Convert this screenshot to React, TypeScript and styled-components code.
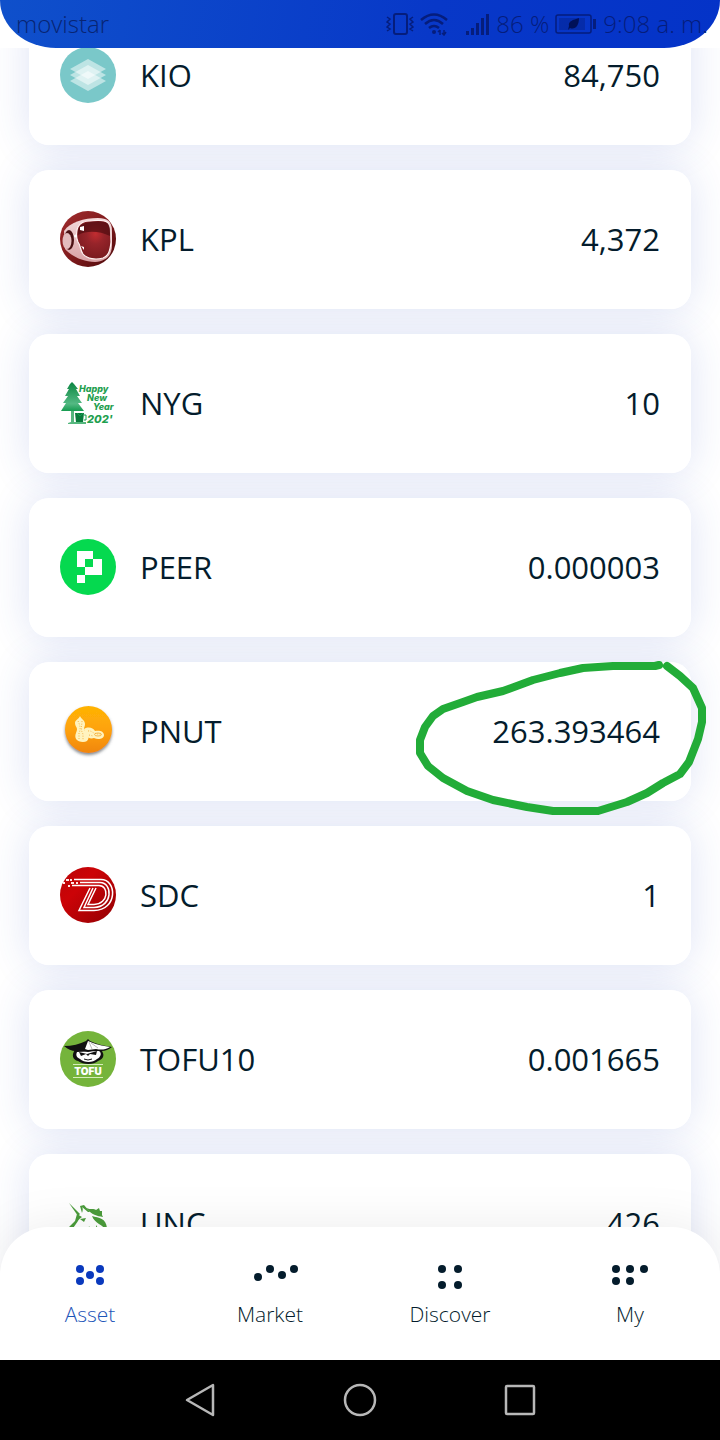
// src/App.tsx
import React from 'react';
import styled, { createGlobalStyle } from 'styled-components';

const GlobalStyle = createGlobalStyle`
  * {
    box-sizing: border-box;
  }
  body {
    margin: 0;
    background: #ffffff;
    font-family: 'Open Sans', 'Noto Sans', sans-serif;
    color: #041c2c;
  }
`;

const Screen = styled.div`
  display: flex;
  flex-direction: column;
  height: 100vh;
  overflow: hidden;
`;

const StatusWrap = styled.header`
  position: relative;
  z-index: 2;
  flex: none;
  background: #ffffff;
`;

const StatusBar = styled.div`
  display: flex;
  align-items: center;
  justify-content: space-between;
  height: 48px;
  padding: 0 12px 0 16px;
  border-radius: 0 0 56px 56px / 0 0 48px 48px;
  background: linear-gradient(100deg, #0f50cb, #0838c8 60%, #0433c8);
  color: #082573;
  font-size: 24px;
  font-weight: 300;
  line-height: 32px;
  white-space: nowrap;
`;

const StatusGroup = styled.div`
  display: flex;
  align-items: center;
  gap: 6px;
  color: #051d7c;
`;

const AssetList = styled.ul`
  position: relative;
  z-index: 0;
  display: flex;
  flex: 1;
  flex-direction: column;
  gap: 25px;
  min-height: 0;
  margin: -42px 0 0;
  padding: 0 29px;
  list-style: none;
`;

/* the shadow sits under every card, so it never tints the next one */
const Card = styled.li`
  position: relative;
  display: flex;
  flex: none;
  align-items: center;
  gap: 24px;
  padding: 41px 31px 42px;
  border-radius: 20px;
  background: #ffffff;

  &::before {
    content: '';
    position: absolute;
    inset: 0;
    z-index: -1;
    border-radius: 20px;
    box-shadow: 0 0 40px rgba(50, 80, 190, 0.16);
  }
`;

const TokenIcon = styled.svg`
  flex: none;
  width: 56px;
  height: 56px;
`;

const CardText = styled.span`
  font-size: 31px;
  line-height: 40px;
`;

const Amount = styled(CardText)`
  margin-left: auto;
`;

const Marker = styled.svg`
  position: absolute;
  top: -4px;
  right: -18px;
  width: 296px;
  height: 160px;
  pointer-events: none;
`;

const TabBar = styled.nav`
  position: relative;
  z-index: 1;
  display: grid;
  flex: none;
  grid-template-columns: repeat(4, 1fr);
  margin-top: -67px;
  padding: 35px 0 32px;
  border-radius: 48px 48px 0 0;
  background: #ffffff;
  box-shadow: 0 0 50px rgba(0, 0, 0, 0.08);
`;

const Tab = styled.button<{ $active?: boolean }>`
  display: flex;
  flex-direction: column;
  align-items: center;
  gap: 10px;
  padding: 0;
  border: 0;
  background: none;
  color: ${({ $active }) => ($active ? '#1c55b8' : '#041c2c')};
  font-family: inherit;
  font-size: 21px;
  font-weight: 300;
  line-height: 28px;

  svg {
    fill: ${({ $active }) => ($active ? '#0a39bd' : '#041c2c')};
  }
`;

const SystemBar = styled.footer`
  display: flex;
  flex: none;
  align-items: center;
  justify-content: center;
  gap: 120px;
  height: 80px;
  background: #000000;
`;

const SystemButton = styled.button`
  width: 40px;
  height: 40px;
  padding: 0;
  border: 0;
  background: none;

  svg {
    display: block;
    fill: none;
    stroke: #b8b8b8;
    stroke-width: 2.5;
    stroke-linejoin: round;
  }
`;

const KioIcon = () => (
	<TokenIcon viewBox='0 0 56 56'>
		<circle cx='28' cy='28' r='28' fill='#7ac8c9' />
		<g fill='#ffffff' fillOpacity='0.5'>
			<path d='M28 12 46 22 28 32 10 22Z' />
			<path d='M28 18 46 28 28 38 10 28Z' />
			<path d='M28 24 46 34 28 44 10 34Z' />
		</g>
	</TokenIcon>
);

const KplIcon = () => (
	<TokenIcon viewBox='0 0 56 56'>
		<defs>
			<linearGradient id='kplBack' x1='0' y1='0' x2='1' y2='1'>
				<stop offset='0' stopColor='#a32e30' />
				<stop offset='0.55' stopColor='#7c191b' />
				<stop offset='1' stopColor='#4b090b' />
			</linearGradient>
			<radialGradient id='kplVisor' cx='0.55' cy='0.35' r='0.65'>
				<stop offset='0' stopColor='#c22c30' />
				<stop offset='0.4' stopColor='#96242a' />
				<stop offset='1' stopColor='#7a1a1f' />
			</radialGradient>
			<linearGradient id='kplShell' x1='0' y1='0' x2='0' y2='1'>
				<stop offset='0' stopColor='#f3d9da' />
				<stop offset='1' stopColor='#d8a0a4' />
			</linearGradient>
		</defs>
		<circle cx='28' cy='28' r='28' fill='url(#kplBack)' />
		<path d='M4 20C10 11 24 7 38 7C47 7 52 10 52 20V34C52 45 46 50 35 51C22 51 10 44 5 38Z' fill='url(#kplShell)' />
		<path d='M30 10C38 9 45 9 48 12C51 16 51 24 51 31C50 41 48 45 43 47C36 49 27 48 23 43C20 39 21 35 18 31C16 27 16 20 18 16C20 12 24 10 30 10Z' fill='url(#kplVisor)' stroke='#fff2f2' strokeWidth='1.2' />
		<path d='M18 24C27 19 40 20 50 25C51 17 49 13 47 12C43 10 36 10 30 11C22 12 17 15 18 24Z' fill='#4f0b10' fillOpacity='0.7' />
		<ellipse cx='9' cy='29' rx='5' ry='10' fill='#4b1013' />
		<ellipse cx='7' cy='30' rx='4.5' ry='8' fill='#e3bcbe' />
		<path d='M20 16 24 15 24 20 20 19ZM21 35 24 36 24 39Z' fill='#ffffff' />
		<circle cx='15.5' cy='25' r='1.5' fill='#ffffff' />
	</TokenIcon>
);

const NygIcon = () => (
	<TokenIcon viewBox='0 0 56 56'>
		<defs>
			<linearGradient id='nygTree' x1='0' y1='0' x2='0' y2='1'>
				<stop offset='0' stopColor='#0b8443' />
				<stop offset='0.3' stopColor='#279a5a' />
				<stop offset='0.75' stopColor='#54b983' />
				<stop offset='1' stopColor='#159b50' />
			</linearGradient>
		</defs>
		<path d='M12 7 14 9 18 14 16 14 20 21 17 21 22 28 18 28 24 36H1L6 28H3L8 21H5L9 14H7L10 9Z' fill='url(#nygTree)' />
		<path d='M11 36H14V47H26V49H8V48L11 47Z' fill='#55b77e' />
		<path d='M15 38H24L23 47H16Z' fill='#0a7b3c' />
		<path d='M17 38 20 41 23 38M24 40H26V45H24' fill='none' stroke='#14a050' strokeWidth='1' />
		<g fill='#1fa04f' fontFamily='Inter, sans-serif' fontStyle='italic' fontWeight='800'>
			<text x='19' y='17' fontSize='9'>Happy</text>
			<text x='27' y='26' fontSize='9'>New</text>
			<text x='33' y='35' fontSize='9'>Year</text>
			<text x='27' y='48' fontSize='11'>202'</text>
		</g>
	</TokenIcon>
);

const PeerIcon = () => (
	<TokenIcon viewBox='0 0 56 56'>
		<circle cx='28' cy='28' r='28' fill='#05d94f' />
		<path d='M17 12H33V20H42V36H25V28H17ZM25 20V28H33V20Z' fill='#ffffff' fillRule='evenodd' />
		<path d='M17 36H25V44H17Z' fill='#ffffff' />
	</TokenIcon>
);

const PnutIcon = () => (
	<TokenIcon viewBox='0 0 56 56'>
		<defs>
			<linearGradient id='pnutFill' x1='0' y1='0' x2='0' y2='1'>
				<stop offset='0' stopColor='#ffb405' />
				<stop offset='0.5' stopColor='#fea209' />
				<stop offset='1' stopColor='#f0860f' />
			</linearGradient>
			<filter id='pnutShadow' x='-20%' y='-20%' width='140%' height='150%'>
				<feDropShadow dx='0' dy='2' stdDeviation='1.5' floodColor='#53585f' floodOpacity='0.7' />
			</filter>
		</defs>
		<circle cx='28.5' cy='26.5' r='23.5' fill='url(#pnutFill)' filter='url(#pnutShadow)' />
		<path d='M20 13C21 16 25 17 25 21C25 24 23 25 25 28C28 32 30 35 27 38C24 40 18 39 16 36C14 32 17 29 17 26C17 24 15 23 15 20C15 17 19 16 20 13Z' fill='#fff3bf' />
		<path d='M24 26C29 23 33 25 35 28C39 27 44 28 44 32C44 36 38 37 34 35C31 36 28 35 26 33Z' fill='#fff3bf' />
		<g fill='none' stroke='#f2a72c' strokeWidth='0.8' strokeDasharray='1 1.5'>
			<path d='M18 18C20 22 21 26 19 30V37M22 18C22 23 20 26 23 31V37' />
			<path d='M28 28C32 27 33 32 41 31M29 32 33 33' />
		</g>
		<ellipse cx='38' cy='31.5' rx='3.5' ry='1.5' fill='none' stroke='#f2a72c' strokeWidth='0.8' />
	</TokenIcon>
);

const SdcIcon = () => (
	<TokenIcon viewBox='0 0 56 56'>
		<defs>
			<linearGradient id='sdcFill' x1='0' y1='0' x2='1' y2='1'>
				<stop offset='0' stopColor='#b80508' />
				<stop offset='0.35' stopColor='#cc0307' />
				<stop offset='1' stopColor='#920103' />
			</linearGradient>
		</defs>
		<circle cx='28' cy='28' r='28' fill='url(#sdcFill)' />
		<g fill='none' stroke='#ffffff' strokeWidth='1.5'>
			<path d='M14 12.5H41C57 12.5 58 43 34 43.5H19L30 21' />
			<path d='M20 15.5H40C53 15.5 53 40 34 40.5H24L33 21' />
			<path d='M12 18.5H39C49 18.5 49 37 34 37.5H28L36 21' />
		</g>
		<path d='M6 12H9V14H6ZM10 12H12V14H10ZM3 15H5V17H3ZM11 15H14V17H11ZM16 15H18V17H16ZM8 18H10V20H8Z' fill='#ffe5e5' />
	</TokenIcon>
);

const TofuIcon = () => (
	<TokenIcon viewBox='0 0 56 56'>
		<circle cx='28' cy='28' r='28' fill='#75b43b' />
		<path d='M15 19C11 24 13 29 18 30C23 34 34 34 38 30C44 28 45 23 41 19Z' fill='#111111' />
		<path d='M17 21C15 25 18 27 20 28C24 32 33 32 37 28C41 26 42 22 39 20Z' fill='#ffffff' />
		<path d='M19 21 27 23 37 20 36 24 30 23 28 25 26 23 21 25Z' fill='#111111' />
		<path d='M24 28Q28 30 32 28' fill='none' stroke='#111111' strokeWidth='1' />
		<path d='M28 8 30 10C36 13 44 15 52 16C47 20 42 21 36 19L28 21L20 19C15 21 10 20 4 15C12 15 20 13 26 10Z' fill='#111111' />
		<path d='M28 10C34 13 43 15 50 16C45 19 41 19 36 18L28 19L25 18Z' fill='#ffffff' />
		<path d='M29 11 32 18M31 12 38 17' fill='none' stroke='#777777' strokeWidth='0.5' />
		<path d='M13 33.5H43M13 46.5H43' stroke='#d6edbb' strokeWidth='1' />
		<text x='28' y='44' fill='#ffffff' fontFamily='Inter, sans-serif' fontSize='10' fontWeight='900' textAnchor='middle'>TOFU</text>
	</TokenIcon>
);

const UncIcon = () => (
	<TokenIcon viewBox='0 0 56 56'>
		<g fill='#4b9c3b'>
			<path d='M9 8 20 19 18 21Z' />
			<path d='M17 19 22 22C18 24 17 29 12 34L13 37H10L8 33L15 26Z' />
			<path d='M20 11 22 18C23 15 23 13 22 12L28 17H30L24 10Z' />
			<path d='M26 13C31 15 34 13 36 15L39 13L40 16L42 16V20L43 22C37 21 32 20 26 13Z' />
			<path d='M32 21C39 23 46 23 47 33L46 36C43 29 35 29 32 21Z' />
			<path d='M20 24 26 23 24 27Z' />
			<path d='M29 31 33 38H28ZM36 30 41 38H36Z' />
		</g>
	</TokenIcon>
);

// hand drawn ring around the amount
const Ring = () => (
	<Marker viewBox='413 658 296 160'>
		<path
			d='M659 665 655 666H613L583 668L560 673L533 680L503 691L477 697L463 702L443 709L433 716L425 727L420 740V753L428 766L443 778L467 791L493 800L527 807L553 811H598L627 802L647 793L663 783L680 774L689 762L698 739L702 722V708L693 688L680 676L667 666'
			fill='none'
			stroke='#22ac38'
			strokeWidth='8'
			strokeLinecap='round'
			strokeLinejoin='round'
		/>
	</Marker>
);

const assets = [
	{ name: 'KIO', amount: '84,750', Icon: KioIcon },
	{ name: 'KPL', amount: '4,372', Icon: KplIcon },
	{ name: 'NYG', amount: '10', Icon: NygIcon },
	{ name: 'PEER', amount: '0.000003', Icon: PeerIcon },
	{ name: 'PNUT', amount: '263.393464', Icon: PnutIcon, marked: true },
	{ name: 'SDC', amount: '1', Icon: SdcIcon },
	{ name: 'TOFU10', amount: '0.001665', Icon: TofuIcon },
	{ name: 'UNC', amount: '426', Icon: UncIcon },
];

const tabs = [
	{ name: 'Asset', dots: [[18, 7], [38, 7], [28, 13], [18, 19], [38, 19]], active: true },
	{ name: 'Market', dots: [[16, 15], [28, 7], [40, 13], [52, 7]] },
	{ name: 'Discover', dots: [[20, 7], [36, 7], [20, 23], [36, 23]] },
	{ name: 'My', dots: [[14, 7], [28, 7], [42, 7], [14, 19], [28, 19]] },
];

const App: React.FC = () => (
	<>
		<GlobalStyle />
		<Screen>
			<StatusWrap>
				<StatusBar>
					<span>movistar</span>
					<StatusGroup>
						<svg width='28' height='24' viewBox='0 0 28 24' fill='none' stroke='currentColor' strokeWidth='2'>
							<rect x='8' y='2' width='13' height='20' rx='2' />
							<path d='M1 5 4 7 1 10 4 12 1 15 4 17 1 19M27 5 24 7 27 10 24 12 27 15 24 17 27 19' strokeWidth='1.5' />
						</svg>
						<svg width='28' height='24' viewBox='0 0 28 24' fill='none' stroke='currentColor' strokeWidth='2.5'>
							<path d='M1 8Q14-3 27 8M5 12Q14 4 23 12M9 16Q14 12 19 16' />
							<circle cx='14' cy='20' r='2' fill='currentColor' stroke='none' />
							<path d='M20 18V23M18 20 20 18M24 18V23M22 21 24 23 26 20' strokeWidth='1.5' />
						</svg>
						<svg width='36' height='24' viewBox='0 0 36 24' fill='currentColor'>
							<path d='M12 19H15V23H12ZM17 16H20V23H17ZM22 11H25V23H22ZM27 6H30V23H27ZM32 2H35V23H32Z' />
						</svg>
						<span>86 %</span>
						<svg width='42' height='24' viewBox='0 0 42 24' fill='none' stroke='currentColor'>
							<rect x='1' y='3' width='35' height='18' rx='2' strokeWidth='1.5' />
							<path d='M4 6H30V18H4Z' fill='currentColor' fillOpacity='0.4' stroke='none' />
							<path d='M24 6C24 14 20 18 15 16L13 18L14 14C13 9 18 8 24 6Z' fill='#001058' stroke='none' />
							<path d='M38 7H41V17H38Z' fill='currentColor' stroke='none' />
						</svg>
						<span>9:08 a. m.</span>
					</StatusGroup>
				</StatusBar>
			</StatusWrap>

			<AssetList>
				{assets.map(({ name, amount, Icon, marked }) => (
					<Card key={name}>
						<Icon />
						<CardText>{name}</CardText>
						<Amount>{amount}</Amount>
						{marked && <Ring />}
					</Card>
				))}
			</AssetList>

			<TabBar>
				{tabs.map(({ name, dots, active }) => (
					<Tab key={name} type='button' $active={active}>
						<svg width='56' height='28' viewBox='0 0 56 28'>
							{dots.map(([cx, cy]) => (
								<circle key={`${cx}-${cy}`} cx={cx} cy={cy} r='4' />
							))}
						</svg>
						{name}
					</Tab>
				))}
			</TabBar>

			<SystemBar>
				<SystemButton type='button' aria-label='Back'>
					<svg width='40' height='40' viewBox='0 0 40 40'>
						<path d='M7 20 33 5V35Z' />
					</svg>
				</SystemButton>
				<SystemButton type='button' aria-label='Home'>
					<svg width='40' height='40' viewBox='0 0 40 40'>
						<circle cx='20' cy='20' r='15' />
					</svg>
				</SystemButton>
				<SystemButton type='button' aria-label='Recents'>
					<svg width='40' height='40' viewBox='0 0 40 40'>
						<rect x='6' y='6' width='28' height='28' rx='1' />
					</svg>
				</SystemButton>
			</SystemBar>
		</Screen>
	</>
);

export default App;
